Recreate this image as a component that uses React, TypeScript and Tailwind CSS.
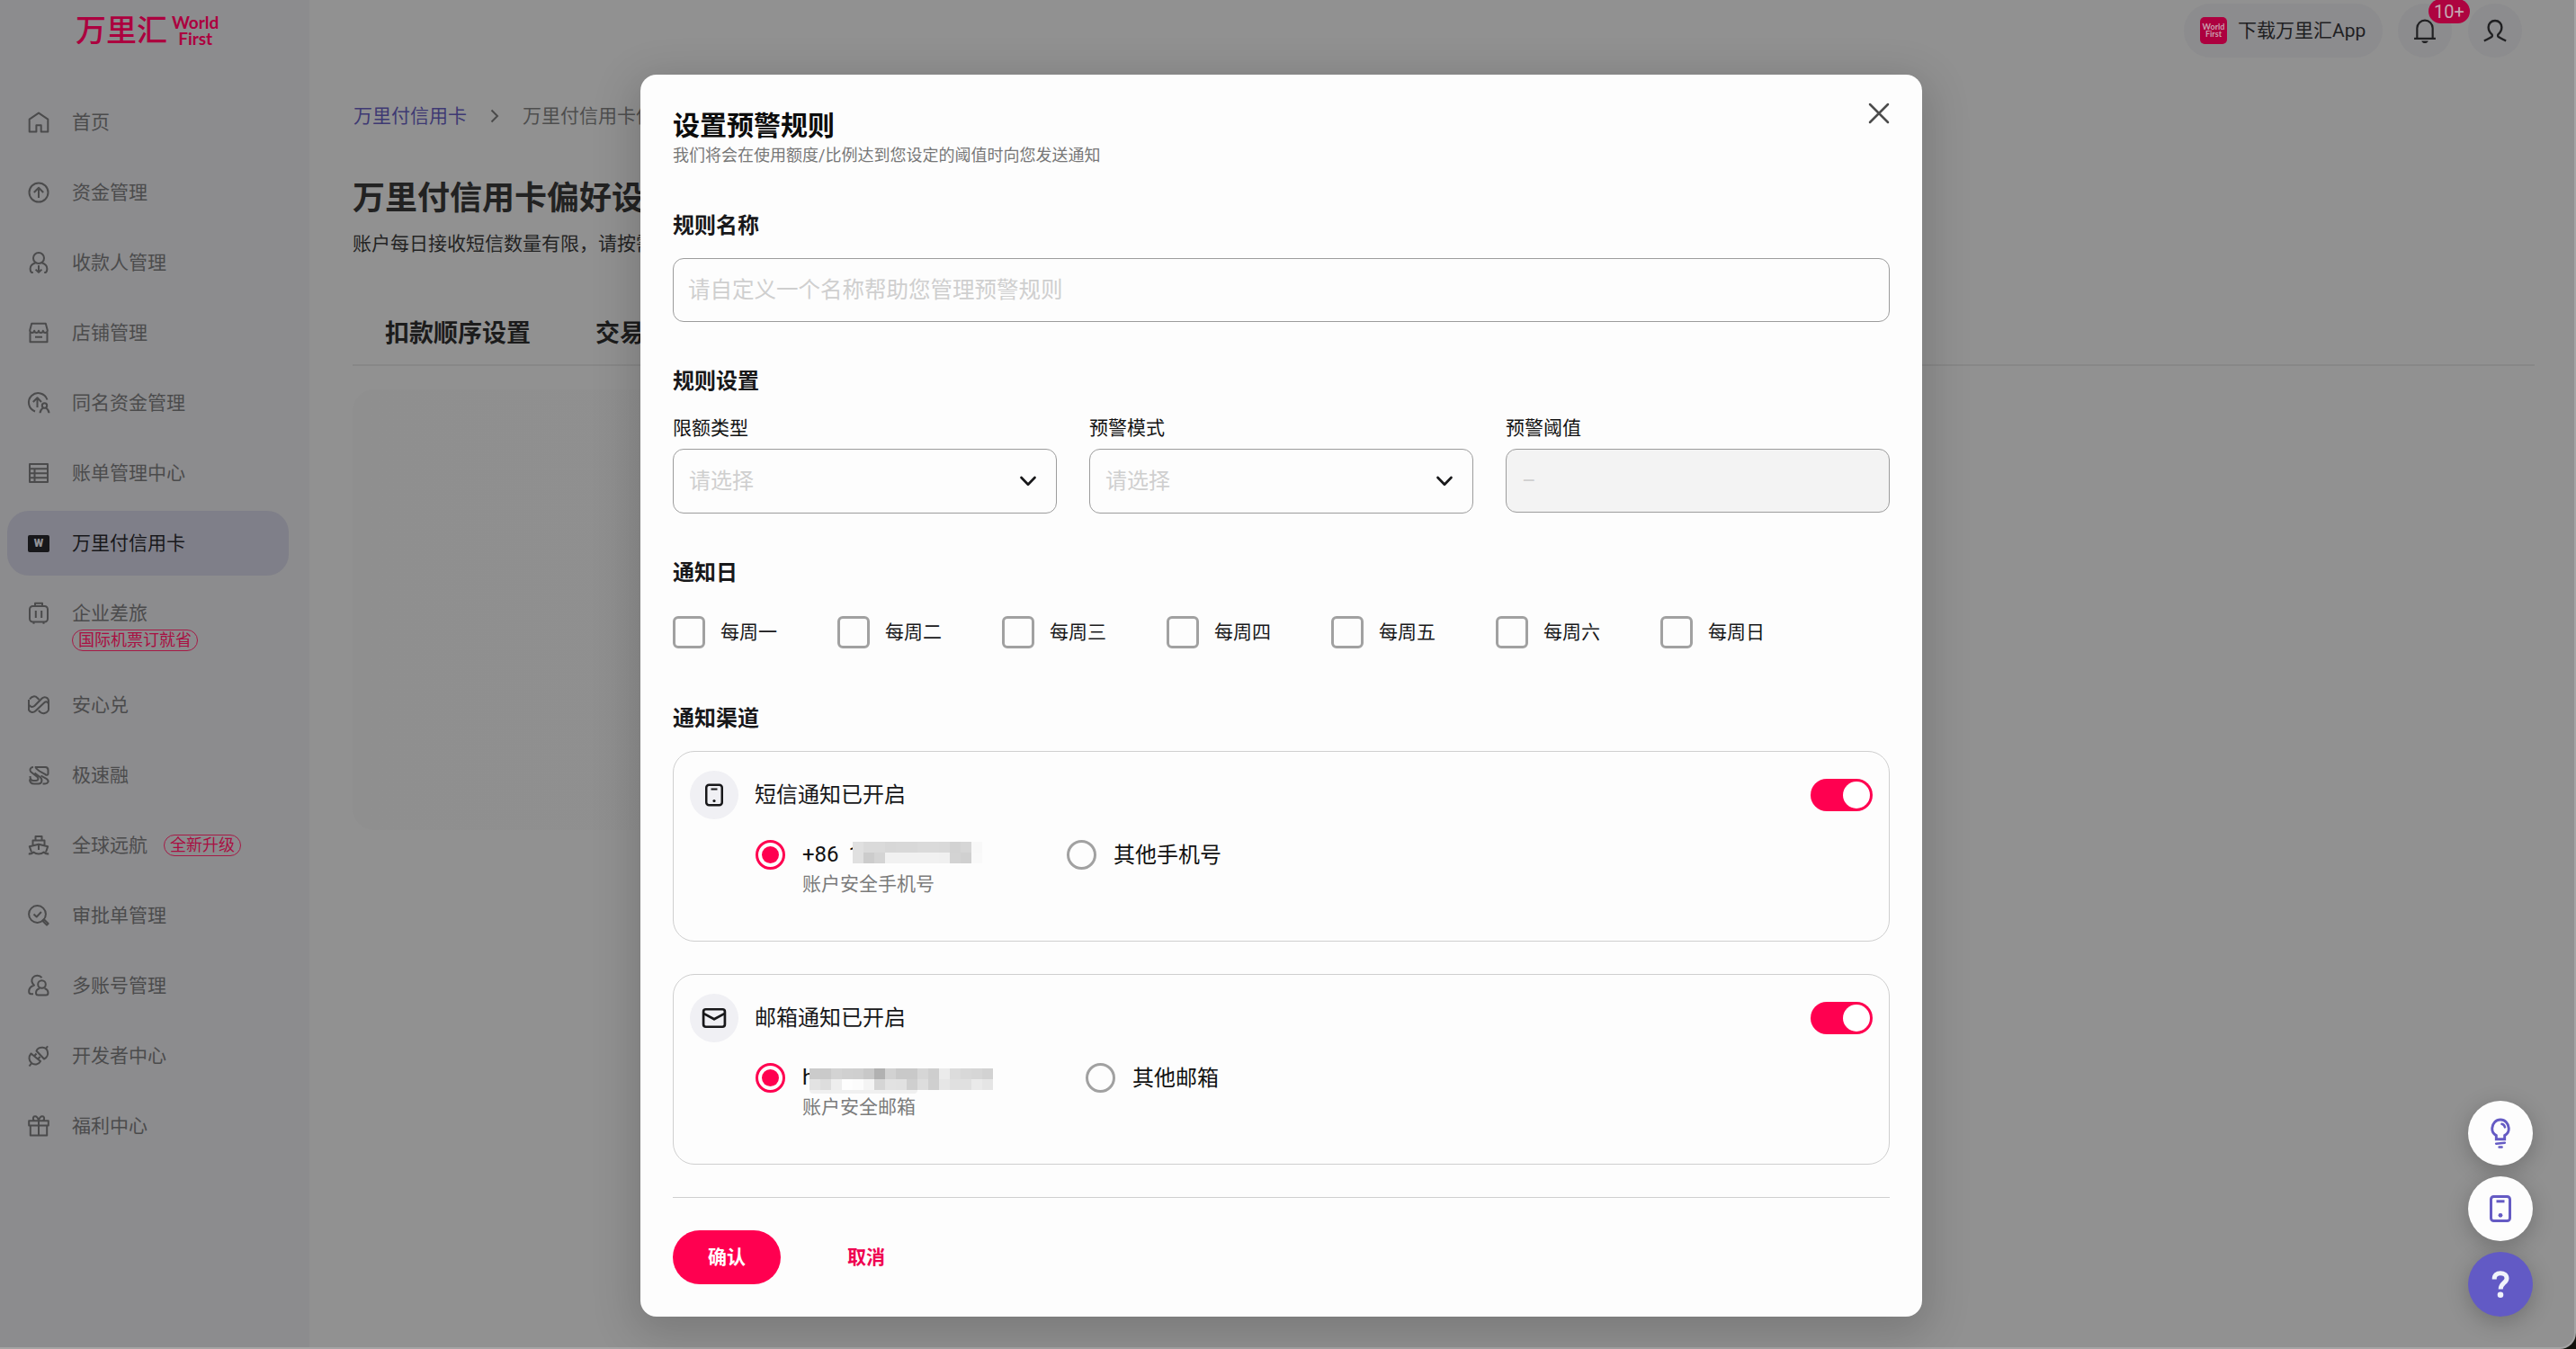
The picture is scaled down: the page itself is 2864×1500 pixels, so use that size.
import { useState } from 'react';
import type { ReactNode } from 'react';
import clsx from 'clsx';

interface NavItem {
  key: string;
  label: string;
  icon: ReactNode;
  tag?: string;
  tagBelow?: boolean;
}

function Icon({ children, size = 'size-6', width = 2 }: { children: ReactNode; size?: string; width?: number }) {
  return (
    <svg
      viewBox="0 0 24 24"
      className={clsx('shrink-0 overflow-visible', size)}
      fill="none"
      stroke="currentColor"
      strokeWidth={width}
      strokeLinejoin="round"
    >
      {children}
    </svg>
  );
}

const navItems: NavItem[] = [
  {
    key: 'home',
    label: '首页',
    icon: (
      <Icon>
        <path d="M1.7 8.6 12 1.6l10.3 7v13.9h-7.6v-7.3H9.4v7.3H1.7Z" />
      </Icon>
    ),
  },
  {
    key: 'funds',
    label: '资金管理',
    icon: (
      <Icon>
        <circle cx="12" cy="12" r="10.5" />
        <path d="M12 18V7M6.8 12 12 6.8l5.2 5.2" />
      </Icon>
    ),
  },
  {
    key: 'payee',
    label: '收款人管理',
    icon: (
      <Icon>
        <circle cx="12" cy="7" r="6" />
        <path d="M8.5 12.2C5 13.2 2.6 15.6 2.6 19c0 1.5.5 2.9 1.4 3.9h1.8M15.5 12.2c3.5 1 5.9 3.4 5.9 6.8 0 1.5-.5 2.9-1.4 3.9h-1.8M12 15v7.5M8.6 19.6l3.4 3.3 3.4-3.3" />
      </Icon>
    ),
  },
  {
    key: 'store',
    label: '店铺管理',
    icon: (
      <Icon>
        <path d="M4.2 1.8h15.6l2 7.5c0 3.4-4.6 3.6-5 .4-.4 3.2-4.4 3.2-4.8 0-.4 3.2-4.4 3.2-4.8 0-.4 3.2-5 3-5-.4ZM2.5 11.5v10.7h19V11.5M8 16.8h8" />
      </Icon>
    ),
  },
  {
    key: 'same-name',
    label: '同名资金管理',
    icon: (
      <Icon>
        <path d="M8 21.5A10.5 10.5 0 1 1 21.5 8.5M10.5 17V6.5M5.8 11l4.7-4.7L15 11" />
        <circle cx="18.5" cy="15" r="2.7" />
        <path d="M13.5 23.300c.2-3 2-4.800 3.600-5.800M23.500 23.300c-.2-3-2-4.800-3.600-5.800" />
      </Icon>
    ),
  },
  {
    key: 'bill',
    label: '账单管理中心',
    icon: (
      <Icon>
        <path d="M2 2h20v20H2ZM2 7.2h20M2 12.2h20M2 17.2h20M7.5 7.2V22" />
      </Icon>
    ),
  },
  {
    key: 'card',
    label: '万里付信用卡',
    icon: (
      <span className="flex h-[19px] w-6 shrink-0 items-center justify-center rounded-[2px] bg-[#17171a] text-[12px] leading-none font-black text-[#939398]">
        W
      </span>
    ),
  },
  {
    key: 'travel',
    label: '企业差旅',
    tag: '国际机票订就省',
    tagBelow: true,
    icon: (
      <Icon>
        <rect x="2" y="4" width="20" height="17.5" rx="3.5" />
        <path d="M8 4V.8h8V4M8.800 9v8M15.200 9v8M6.500 21.500v2.300M17.500 21.500v2.300" />
      </Icon>
    ),
  },
  {
    key: 'fx',
    label: '安心兑',
    icon: (
      <Icon>
        <path d="M2 5.5C4.5 1.8 8 1.5 10.5 4l2 2M1 6v11.500c1.500 2.800 5 3.300 7.500 1L18.300 9.300c2-1.700 4-1 4.700 1.500" />
        <path d="M1 11.500c1.800 3 4.500 3 6.500 1.200L15.700 4.500c3-2.700 7.300-.8 7.300 3v10.200M11.800 18l2.200 2c2.600 2.200 6.500 1.400 9-2.300" />
      </Icon>
    ),
  },
  {
    key: 'loan',
    label: '极速融',
    icon: (
      <Icon>
        <path d="M8.500 3h11c2 0 3 1.500 3 3.500v3.700c0 2-2 2-3 1L13 7.500C10 5.500 9 5 8.500 3ZM6 3C3 3 1.500 6 3 8l7 5.500c2.500 2 1.500 4.500-1 4.500H6c-3 0-3.500-2.200-3.500-5M2 16.500C2 19.500 4 21.500 7 21.500h5c4 0 4.500-5 1.500-7.500L7.500 9.500" />
        <path d="m14.500 12.500 6.500 3.700c3 2.300 1.500 5.300-2 5.300h-2.500" />
      </Icon>
    ),
  },
  {
    key: 'voyage',
    label: '全球远航',
    tag: '全新升级',
    icon: (
      <Icon>
        <path d="M8.500 6.500V2h7v4.500M5.500 12V6.500h13V12M4 19.500 1.800 13.200 12 10.800l10.200 2.400L20 19.500M12 11v6M.8 21.200c2.500.6 4-.2 5.500-1.700 3 2.600 8.400 2.600 11.400 0 1.500 1.500 3 2.300 5.500 1.700" />
      </Icon>
    ),
  },
  {
    key: 'approve',
    label: '审批单管理',
    icon: (
      <Icon>
        <circle cx="10.5" cy="10.5" r="9.4" />
        <path d="m6.500 10.500 3.200 3 5.200-5.500M16.200 17.800l1.600-1.600 4.800 4.800-1.600 1.600Z" />
      </Icon>
    ),
  },
  {
    key: 'accounts',
    label: '多账号管理',
    icon: (
      <Icon>
        <circle cx="15.5" cy="10.5" r="4.3" />
        <path d="M13 15c-2.600.8-4 2.800-4 5 0 1.800 1 2.500 2.500 2.500h8.500c1.500 0 2.500-.7 2.500-2.500 0-2.200-1.500-4.200-4-5M15.500 3.200C13 .2 8-.2 5.500 3 3.500 5.800 4.200 9.500 7 11.500c-3.500 1-5.800 3.500-5.800 7 0 1.700.8 2.800 2.300 2.800H6" />
      </Icon>
    ),
  },
  {
    key: 'dev',
    label: '开发者中心',
    icon: (
      <Icon>
        <path d="M9.500 6.500 18 15.500c3.200-1.500 4.700-5 3.800-8.500-.3-1.300-.8-2-1.500-2.700-.8-.9-1.900-1.300-3.300-1.500C13.500 2.200 10.500 4 9.500 6.500ZM20.300 3.700l1.700-2.500" />
        <path d="M3.500 9.500c-3 3.500-2.500 8 .5 10.500s8 2 10-2ZM3 9l11.500 9.500M7 12.500l2.500-3M11 16l2.500-3M4 20.300 1.500 23.500" />
      </Icon>
    ),
  },
  {
    key: 'welfare',
    label: '福利中心',
    icon: (
      <Icon>
        <path d="M1.200 6.200h21.600v5.300H1.200ZM2.800 11.500v11h18.400v-11M12 6.200v16.300M12 6c-.8-3-2-4.800-4-4.800-2.300 0-3 2.800-1 5M12 6c.8-3 2-4.800 4-4.800 2.300 0 3 2.800 1 5" />
      </Icon>
    ),
  },
];

const weekdays = ['每周一', '每周二', '每周三', '每周四', '每周五', '每周六', '每周日'];

const phoneMask = [
  ['#e0e0e0', '#dadada', '#dadada', '#d7d7d7', '#d8d8d8', '#d8d8d8', '#dadada', '#dadada', '#d9d9d9', '#d2d2d2', '#d6d6d6', '#f8f8f8'],
  ['#e0e0e0', '#cccccc', '#d4d4d4', '#f1f1f1', '#f1f1f1', '#f1f1f1', '#f1f1f1', '#f1f1f1', '#f0f0f0', '#d3d3d3', '#d0d0d0', '#f9f9f9'],
];

const mailMask = [
  ['#cbcbcb', '#cacaca', '#d3d3d3', '#d0d0d0', '#cfcfcf', '#c8c8c8', '#b1b1b1', '#d2d2d2', '#c9c9c9', '#c9c9c9', '#d6d6d6', '#cecece', '#ebebeb', '#dcdcdc', '#d8d8d8', '#d6d6d6', '#d2d2d2'],
  ['#e3e3e3', '#dddddd', '#eeeeee', '#fefefe', '#fcfcfc', '#f4f4f4', '#d5d5d5', '#e2e2e2', '#e1e1e1', '#cfcfcf', '#dddddd', '#cfcfcf', '#e6e6e6', '#e0e0e0', '#e0e0e0', '#eaeaea', '#e5e5e5'],
];

function Tag({ children }: { children: ReactNode }) {
  return (
    <span className="flex h-6 items-center rounded-full border border-[#a61a46] px-[6px] text-[18px] leading-none whitespace-nowrap text-[#a90f42]">
      {children}
    </span>
  );
}

function Sidebar() {
  return (
    <aside className="flex w-[344px] shrink-0 flex-col bg-[#8c8c8e]">
      <div className="flex h-[97px] items-start pt-[16px] pl-[84px] text-[#ac003f]">
        <span className="text-[34px] leading-[36px] font-medium">万里汇</span>
        <span className="flex flex-col items-center pl-[5px] font-['Lato'] text-[19px] leading-[18px] font-bold">
          <span>World</span>
          <span>First</span>
        </span>
      </div>
      <nav className="flex flex-col">
        {navItems.map((item) => {
          const active = item.key === 'card';

          return (
            <div key={item.key} className={clsx('pl-2', item.tagBelow && 'h-[102px]')}>
              <div className="flex h-[78px] items-center">
                <div
                  className={clsx(
                    'flex h-[72px] w-[313px] items-center rounded-3xl pl-[23px] text-[21px] leading-none',
                    active ? 'bg-[#7f7f89] text-[#18181b]' : 'text-[#4b4b4c]'
                  )}
                >
                  {item.icon}
                  <span className="pl-[25px]">{item.label}</span>
                  {item.tag && !item.tagBelow && (
                    <span className="pl-[18px]">
                      <Tag>{item.tag}</Tag>
                    </span>
                  )}
                </div>
              </div>
              {item.tagBelow && (
                <div className="-mt-[21px] flex pl-[72px]">
                  <Tag>{item.tag}</Tag>
                </div>
              )}
            </div>
          );
        })}
      </nav>
    </aside>
  );
}

function TopBar() {
  return (
    <header className="flex h-[68px] items-center justify-end pr-[58px] text-[#202022]">
      <div className="flex h-[60px] w-[221px] items-center rounded-full bg-[#8c8c8e] pl-[18px]">
        <span className="flex size-[30px] flex-col items-center justify-center rounded-[5px] bg-[#ad003f] font-['Lato'] text-[9px] leading-[8px] font-bold text-[#c9a0ae]">
          <span>World</span>
          <span>First</span>
        </span>
        <span className="pl-3 text-[21px] leading-none">下载万里汇App</span>
      </div>
      <div className="relative ml-[17px] flex size-[60px] items-center justify-center rounded-full bg-[#8c8c8e]">
        <Icon size="size-[26px]" width={2}>
          <path d="M1 20.200h22M4 20.200V9.500a8 8 0 0 1 16 0v10.700" />
          <path d="M8.500 22.500h7c-.8 1.800-2 2.400-3.500 2.400s-2.700-.6-3.500-2.400Z" fill="currentColor" stroke="none" />
        </Icon>
        <span className="absolute -top-[5px] left-[34px] flex h-[27px] w-[46px] items-center justify-center rounded-full bg-[#ae0440] text-[20px] leading-none text-[#c5aab3]">
          10+
        </span>
      </div>
      <div className="ml-[18px] flex size-[60px] items-center justify-center rounded-full bg-[#8c8c8e]">
        <Icon size="size-[26px]" width={2.2}>
          <path d="M.8 22.600c3.400-1.800 5.600-2.800 7.700-4.200.8-.6.800-1.700.2-2.500C6.300 13.700 5.200 11.500 5.200 8.600 5.200 4.800 8 1.800 12 1.800s6.800 3 6.800 6.800c0 2.900-1.100 5.100-3.500 7.300-.6.800-.6 1.900.2 2.500 2.100 1.400 4.300 2.400 7.700 4.200" />
        </Icon>
      </div>
    </header>
  );
}

function PageContent() {
  return (
    <main className="flex flex-col pr-[44px] pl-12">
      <div className="mt-[46px] flex h-[30px] items-center pl-px text-[21px] leading-none">
        <span className="text-[#3e3973]">万里付信用卡</span>
        <svg viewBox="0 0 10 16" className="mx-[26px] h-4 w-[10px]" fill="none" stroke="#4b4b4b" strokeWidth="2">
          <path d="m1.500 1.500 6.500 6.500-6.500 6.500" />
        </svg>
        <span className="text-[#4e4e4e]">万里付信用卡偏</span>
      </div>
      <h1 className="mt-[50px] flex h-[54px] items-center text-[36px] leading-none font-bold text-[#222222]">
        万里付信用卡偏好设置
      </h1>
      <p className="mt-[8px] flex h-[30px] items-center text-[21px] leading-none text-[#242424]">
        账户每日接收短信数量有限，请按需设置
      </p>
      <div className="mt-[48px] flex h-[73px] items-center gap-[72px] border-b-2 border-[#878787] pt-[3px] pl-9 text-[27px] leading-none font-bold text-[#1c1c1c]">
        <span>扣款顺序设置</span>
        <span>交易预警设置</span>
      </div>
      <div className="mt-[26px] h-[490px] rounded-3xl bg-linear-to-r from-[#8f8f8f] to-[#919191] to-60%" />
    </main>
  );
}

function SectionTitle({ children, className }: { children: ReactNode; className: string }) {
  return (
    <h3 className={clsx('flex h-9 items-center text-[24px] leading-none font-bold text-[#18181a]', className)}>
      {children}
    </h3>
  );
}

function SelectField({ label, placeholder, disabled }: { label: string; placeholder: string; disabled?: boolean }) {
  return (
    <div className="flex flex-1 flex-col">
      <label className="flex h-[30px] items-center text-[21px] leading-none text-[#111]">{label}</label>
      <button
        className={clsx(
          'mt-2 flex items-center justify-between rounded-[12px] border border-[#9c9c9c] pr-[21px] pl-[17px] text-[24px] leading-none text-[#cfcfcf]',
          disabled ? 'h-[71px] bg-[#f3f3f3]' : 'h-[72px]'
        )}
      >
        <span>{placeholder}</span>
        {!disabled && (
          <svg viewBox="0 0 20 12" className="h-3 w-5" fill="none" stroke="#18181a" strokeWidth="2.7" strokeLinecap="round" strokeLinejoin="round">
            <path d="m2.500 2 7.500 7.700L17.500 2" />
          </svg>
        )}
      </button>
    </div>
  );
}

function Radio({ checked }: { checked?: boolean }) {
  return (
    <span
      className={clsx(
        'flex size-[33px] shrink-0 items-center justify-center rounded-full border-3',
        checked ? 'border-[#ff0050]' : 'border-[#a1a1a1]'
      )}
    >
      {checked && <span className="size-[19px] rounded-full bg-[#ff0050]" />}
    </span>
  );
}

function Mosaic({ rows }: { rows: string[][] }) {
  return (
    <span className="flex flex-col">
      {rows.map((row, y) => (
        <span key={y} className="flex">
          {row.map((color, x) => (
            <span key={x} className="size-3 shrink-0" style={{ backgroundColor: color }} />
          ))}
        </span>
      ))}
    </span>
  );
}

interface ChannelCardProps {
  icon: ReactNode;
  title: string;
  account: ReactNode;
  accountHint: string;
  other: string;
  firstWidth: string;
  className: string;
}

function ChannelCard({ icon, title, account, accountHint, other, firstWidth, className }: ChannelCardProps) {
  const [enabled, setEnabled] = useState(true);

  return (
    <div className={clsx('flex h-[212px] flex-col rounded-3xl border border-[#cfcfcf] px-[18px] pt-[21px]', className)}>
      <div className="flex h-[54px] items-center">
        <span className="flex size-[54px] items-center justify-center rounded-full bg-[#f0f0f4] text-[#18181a]">{icon}</span>
        <span className="pl-[18px] text-[24px] leading-none text-[#18181a]">{title}</span>
        <button
          onClick={() => setEnabled(!enabled)}
          className={clsx(
            'ml-auto flex h-9 w-[69px] items-center rounded-full px-[3px]',
            enabled ? 'justify-end bg-[#ff0050]' : 'justify-start bg-[#c4c4c4]'
          )}
        >
          <span className="size-[30px] rounded-full bg-white" />
        </button>
      </div>
      <div className="mt-[22px] flex pl-[73px]">
        <div className={clsx('flex', firstWidth)}>
          <span className="pt-px">
            <Radio checked />
          </span>
          <div className="flex flex-col pl-[19px]">
            <span className="relative flex h-[34px] items-center text-[24px] leading-none text-[#111]">{account}</span>
            <span className="flex h-8 items-center text-[21px] leading-none text-[#7b7b7b]">{accountHint}</span>
          </div>
        </div>
        <div className="flex h-[35px] items-center gap-[19px] text-[24px] leading-none text-[#111]">
          <Radio />
          <span>{other}</span>
        </div>
      </div>
    </div>
  );
}

function RuleDialog() {
  const [days, setDays] = useState<string[]>([]);

  const toggleDay = (day: string) => {
    setDays(days.includes(day) ? days.filter((d) => d !== day) : [...days, day]);
  };

  return (
    <section className="relative flex h-[1381px] w-[1425px] flex-col rounded-[18px] bg-[#fdfdfd] px-9 pt-[34px] shadow-[0_12px_48px_8px_rgba(0,0,0,0.16)]">
      <button className="absolute top-[31px] right-[36px] text-[#4c4c4c]">
        <svg viewBox="0 0 24 24" className="size-6" fill="none" stroke="currentColor" strokeWidth="2.5" strokeLinecap="round">
          <path d="m2 2 20 20M22 2 2 22" />
        </svg>
      </button>
      <h2 className="flex h-[45px] items-center text-[30px] leading-none font-bold text-[#0c0c0c]">设置预警规则</h2>
      <p className="flex h-[22px] items-center text-[18px] leading-none text-[#777]">
        我们将会在使用额度/比例达到您设定的阈值时向您发送通知
      </p>

      <SectionTitle className="mt-[49px]">规则名称</SectionTitle>
      <input
        placeholder="请自定义一个名称帮助您管理预警规则"
        className="mt-[18px] h-[71px] rounded-[12px] border border-[#9c9c9c] px-[16px] text-[24.5px] outline-none placeholder:text-[#cfcfcf]"
      />

      <SectionTitle className="mt-12">规则设置</SectionTitle>
      <div className="mt-[19px] flex h-[110px] gap-9">
        <SelectField label="限额类型" placeholder="请选择" />
        <SelectField label="预警模式" placeholder="请选择" />
        <SelectField label="预警阈值" placeholder="–" disabled />
      </div>

      <SectionTitle className="mt-12">通知日</SectionTitle>
      <div className="mt-[30px] flex">
        {weekdays.map((day) => (
          <button key={day} onClick={() => toggleDay(day)} className="flex h-9 w-[183px] items-center">
            <span
              className={clsx(
                'size-9 rounded-[6px] border-3',
                days.includes(day) ? 'border-[#ff0050] bg-[#ff0050]' : 'border-[#a1a1a1]'
              )}
            />
            <span className="pl-[17px] text-[21px] leading-none text-[#18181a]">{day}</span>
          </button>
        ))}
      </div>

      <SectionTitle className="mt-[60px]">通知渠道</SectionTitle>
      <ChannelCard
        className="mt-[18px]"
        title="短信通知已开启"
        icon={
          <svg viewBox="0 0 20 26" className="h-[26px] w-5" fill="none" stroke="currentColor" strokeWidth="2.5">
            <rect x="1.25" y="1.8" width="17.5" height="22.4" rx="3" />
            <path d="M6.500 6.500h7" strokeWidth="2" />
            <circle cx="10" cy="19.5" r="1.6" fill="currentColor" stroke="none" />
          </svg>
        }
        account={
          <>
            <span>+86</span>
            <span className="pl-[11px]">1</span>
            <span className="absolute top-[3px] left-[56px]">
              <Mosaic rows={phoneMask} />
            </span>
          </>
        }
        accountHint="账户安全手机号"
        other="其他手机号"
        firstWidth="w-[346px]"
      />
      <ChannelCard
        className="mt-9"
        title="邮箱通知已开启"
        icon={
          <Icon size="size-[26px]" width={2.5}>
            <rect x="1" y="3" width="22" height="18" rx="2.5" />
            <path d="m1.500 7.500 10.500 5.700 10.500-5.700" />
          </Icon>
        }
        account={
          <>
            h
            <span className="absolute top-[7px] left-[8px]">
              <Mosaic rows={mailMask} />
              <span className="block h-1 w-[120px] rounded-b bg-[#f0f0f0]" />
            </span>
          </>
        }
        accountHint="账户安全邮箱"
        other="其他邮箱"
        firstWidth="w-[367px]"
      />

      <div className="mt-9 h-px bg-[#cfcfcf]" />
      <div className="mt-9 flex items-center text-[21px] leading-none font-bold">
        <button className="h-[60px] w-[120px] rounded-full bg-[#ff0050] text-white">确认</button>
        <button className="ml-[74px] text-[#ef0050]">取消</button>
      </div>
    </section>
  );
}

function FloatingButtons() {
  return (
    <div className="absolute right-12 bottom-9 flex flex-col gap-3 text-[#655bc4]">
      <button className="flex size-[72px] items-center justify-center rounded-full bg-[#fdfdfd] shadow-[0_6px_24px_rgba(0,0,0,0.22)]">
        <svg viewBox="0 0 24 36" className="h-[35px] w-6 overflow-visible" fill="none" stroke="currentColor" strokeWidth="3" strokeLinecap="round">
          <path d="M7.200 24.500h9.600v-4.300c3-1.700 5-4.500 4.700-8.500C21.200 6.200 17.200 2 12 2s-9.200 4.200-9.500 9.700c-.3 4 1.700 6.800 4.700 8.500Z" />
          <path d="M13.500 7c1.800.4 3.200 1.800 3.600 3.700M7 29.500l10-1M10.500 33.500h3.200" strokeWidth="2.5" />
        </svg>
      </button>
      <button className="flex size-[72px] items-center justify-center rounded-full bg-[#fdfdfd] shadow-[0_6px_24px_rgba(0,0,0,0.22)]">
        <svg viewBox="0 0 24 30" className="h-[30px] w-6" fill="none" stroke="currentColor" strokeWidth="3">
          <rect x="1.5" y="1.5" width="21" height="27" rx="3" />
          <path d="M7.500 6.800h9" />
          <circle cx="12" cy="22.3" r="2.4" fill="currentColor" stroke="none" />
        </svg>
      </button>
      <button className="flex size-[72px] items-center justify-center rounded-full bg-[#625ac5] shadow-[0_6px_24px_rgba(0,0,0,0.22)]">
        <svg viewBox="0 0 20 30" className="h-[30px] w-5" fill="none" stroke="#f0f3fb" strokeWidth="5">
          <path d="M3.200 9.500C3 5 6 2.700 10 2.700s7 2.100 7 5.800c0 5-6.800 5.200-6.800 12" />
          <circle cx="10" cy="26.7" r="3.3" fill="#f0f3fb" stroke="none" />
        </svg>
      </button>
    </div>
  );
}

export default function App() {
  return (
    <div className="relative h-[1500px] w-[2864px] overflow-hidden bg-[#11110c] font-['Roboto','Noto_Sans_CJK_SC',sans-serif]">
      <div className="flex h-full w-full overflow-hidden rounded-br-[18px] border-r-2 border-b-2 border-[#a4a4a4] bg-[#919191]">
        <Sidebar />
        <div className="flex flex-1 flex-col">
          <TopBar />
          <PageContent />
        </div>
      </div>

      <div className="absolute inset-0 flex items-start pt-[83px] pl-[712px]">
        <RuleDialog />
      </div>

      <FloatingButtons />
    </div>
  );
}
